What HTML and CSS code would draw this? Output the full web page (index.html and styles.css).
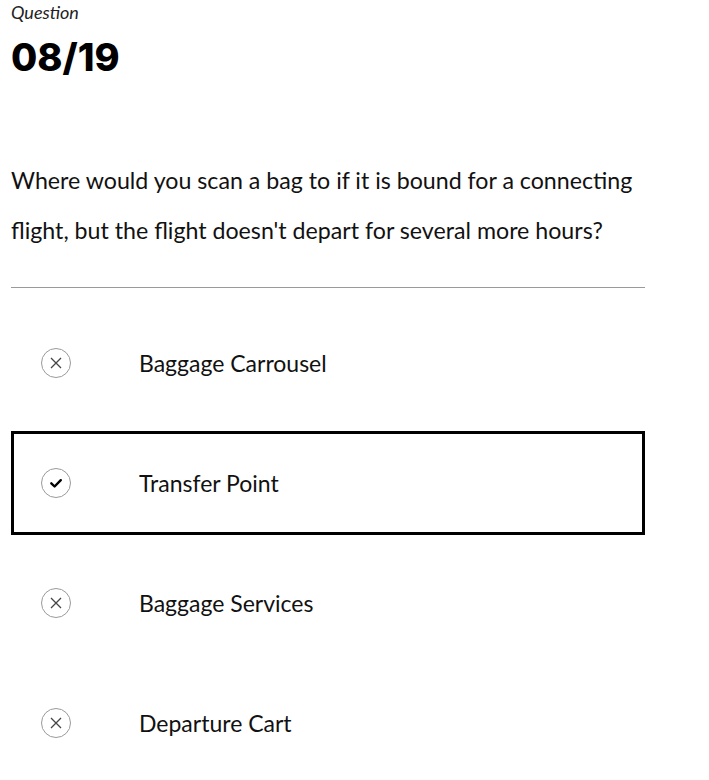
FILE: index.html
```html
<!DOCTYPE html>
<html lang="en">
<head>
<meta charset="utf-8">
<title>Question 08/19</title>
<link rel="stylesheet" href="styles.css">
</head>
<body>
<main class="quiz">
  <p class="label">Question</p>
  <h1 class="counter">08/19</h1>
  <p class="prompt">Where would you scan a bag to if it is bound for a connecting flight, but the flight doesn't depart for several more hours?</p>
  <hr class="divider">
  <ul class="options">
    <li class="option">
      <span class="icon icon-wrong"><svg viewBox="0 0 30 30" width="30" height="30"><circle cx="15" cy="15" r="14.5" fill="none" stroke="#9a9a9a" stroke-width="1"/><path d="M10 10 L20 20 M20 10 L10 20" stroke="#444" stroke-width="1.3" fill="none"/></svg></span>
      <span class="option-text">Baggage Carrousel</span>
    </li>
    <li class="option selected">
      <span class="icon icon-right"><svg viewBox="0 0 30 30" width="30" height="30"><circle cx="15" cy="15" r="14.5" fill="none" stroke="#9a9a9a" stroke-width="1"/><path d="M10.3 15.3 L13.6 18.5 L19.8 12.2" stroke="#000" stroke-width="2.4" stroke-linecap="round" stroke-linejoin="round" fill="none"/></svg></span>
      <span class="option-text">Transfer Point</span>
    </li>
    <li class="option">
      <span class="icon icon-wrong"><svg viewBox="0 0 30 30" width="30" height="30"><circle cx="15" cy="15" r="14.5" fill="none" stroke="#9a9a9a" stroke-width="1"/><path d="M10 10 L20 20 M20 10 L10 20" stroke="#444" stroke-width="1.3" fill="none"/></svg></span>
      <span class="option-text">Baggage Services</span>
    </li>
    <li class="option">
      <span class="icon icon-wrong"><svg viewBox="0 0 30 30" width="30" height="30"><circle cx="15" cy="15" r="14.5" fill="none" stroke="#9a9a9a" stroke-width="1"/><path d="M10 10 L20 20 M20 10 L10 20" stroke="#444" stroke-width="1.3" fill="none"/></svg></span>
      <span class="option-text">Departure Cart</span>
    </li>
  </ul>
</main>
</body>
</html>
```

FILE: styles.css
```css
html, body {
  margin: 0;
  padding: 0;
  background: #fff;
  color: #111;
}

.quiz {
  width: 634px;
  padding: 0 11px;
  font-family: "Lato", "Open Sans", sans-serif;
}

.label {
  margin: 0;
  padding-top: 2px;
  font-style: italic;
  font-size: 18px;
  line-height: 20px;
  color: #222;
}

.counter {
  margin: 0;
  padding-top: 11px;
  font-family: "Inter", "Lato", sans-serif;
  font-weight: 800;
  font-size: 38px;
  line-height: 48px;
  color: #000;
}

.prompt {
  margin: 0;
  padding-top: 74px;
  font-size: 23.2px;
  line-height: 50px;
  color: #111;
}

.divider {
  margin: 32px 0 0 0;
  border: 0;
  border-top: 1px solid #9a9a9a;
  height: 0;
}

.options {
  list-style: none;
  margin: 23px 0 0 0;
  padding: 0;
  display: flex;
  flex-direction: column;
  gap: 16px;
}

.option {
  box-sizing: border-box;
  height: 104px;
  border: 3px solid transparent;
  display: flex;
  align-items: center;
  padding-left: 27px;
  gap: 68px;
}

.option.selected {
  border-color: #000;
}

.icon {
  display: flex;
  width: 30px;
  height: 30px;
  flex: none;
}

.option-text {
  font-size: 23px;
  color: #111;
}
```
